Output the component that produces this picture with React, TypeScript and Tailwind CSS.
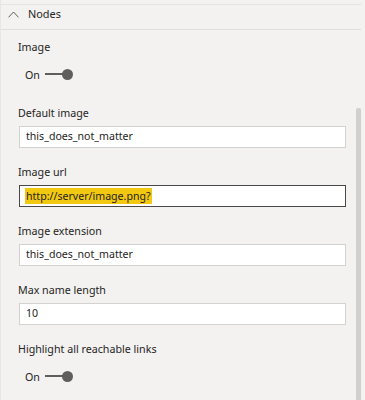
const fields = [
  { label: "Default image", value: "this_does_not_matter" },
  { label: "Image url", value: "http://server/image.png?", focused: true },
  { label: "Image extension", value: "this_does_not_matter" },
  { label: "Max name length", value: "10" },
];

const Toggle = () => (
  <div className="flex items-center h-[20px] pl-[7px] gap-[5px]">
    <span className="text-[10.7px] leading-[14px] pt-[1px] text-[#252423]">On</span>
    <div className="flex items-center">
      <div className="w-[19px] h-[2px] bg-[#5f5e5c]" />
      <div className="w-[11px] h-[11px] rounded-full bg-[#5f5e5c] -ml-[2px]" />
    </div>
  </div>
);

const App = () => {
  return (
    <div
      className="w-[365px] h-[400px] bg-[#f3f2f1] overflow-hidden text-[#252423]"
      style={{ fontFamily: '"Noto Sans", "Open Sans", sans-serif' }}
    >
      <div className="w-[361px] h-full border-l border-[#e8e6e4] flex flex-col">
        <div className="h-[5px] shrink-0 border-b border-[#e6e4e2]" />
        <div className="h-[25px] shrink-0 flex items-start gap-[9px] pl-[7px] pt-[2px] border-b border-[#e1dfdd]">
          <svg width="11" height="7" viewBox="0 0 11 7" fill="none" className="mt-[4px]">
            <path d="M0.5 6.3 L5.5 1 L10.5 6.3" stroke="#605e5c" strokeWidth="1" />
          </svg>
          <span className="text-[10.9px] leading-[14px]">Nodes</span>
        </div>
        <div className="flex flex-1">
          <div className="flex-1 pl-[17px] pt-[10px]">
            <div className="text-[10.7px] leading-[14px]">Image</div>
            <div className="mt-[10px]">
              <Toggle />
            </div>
            <div className="flex flex-col gap-[17px] mt-[22px] w-[328px]">
              {fields.map((f, i) => (
                <div key={i} className="flex flex-col gap-[6px]">
                  <div className="text-[10.7px] leading-[14px]">{f.label}</div>
                  <div
                    className={
                      "h-[22px] ml-[1px] bg-white flex items-center px-[5px] text-[10.6px] border " +
                      (f.focused ? "border-[#4a4846]" : "border-[#d4d2d0]")
                    }
                  >
                    {f.focused ? (
                      <span className="bg-[#f2c811] leading-[16px] pl-[1px] pr-[1px]">{f.value}</span>
                    ) : (
                      <span className="pl-[1px]">{f.value}</span>
                    )}
                  </div>
                </div>
              ))}
              <div>
                <div className="text-[10.7px] leading-[14px]">Highlight all reachable links</div>
                <div className="mt-[10px]">
                  <Toggle />
                </div>
              </div>
            </div>
          </div>
          <div className="w-[5px] mt-[78px] bg-[#d2d0ce] rounded-t-[2px]" />
        </div>
      </div>
    </div>
  );
};

export default App;
